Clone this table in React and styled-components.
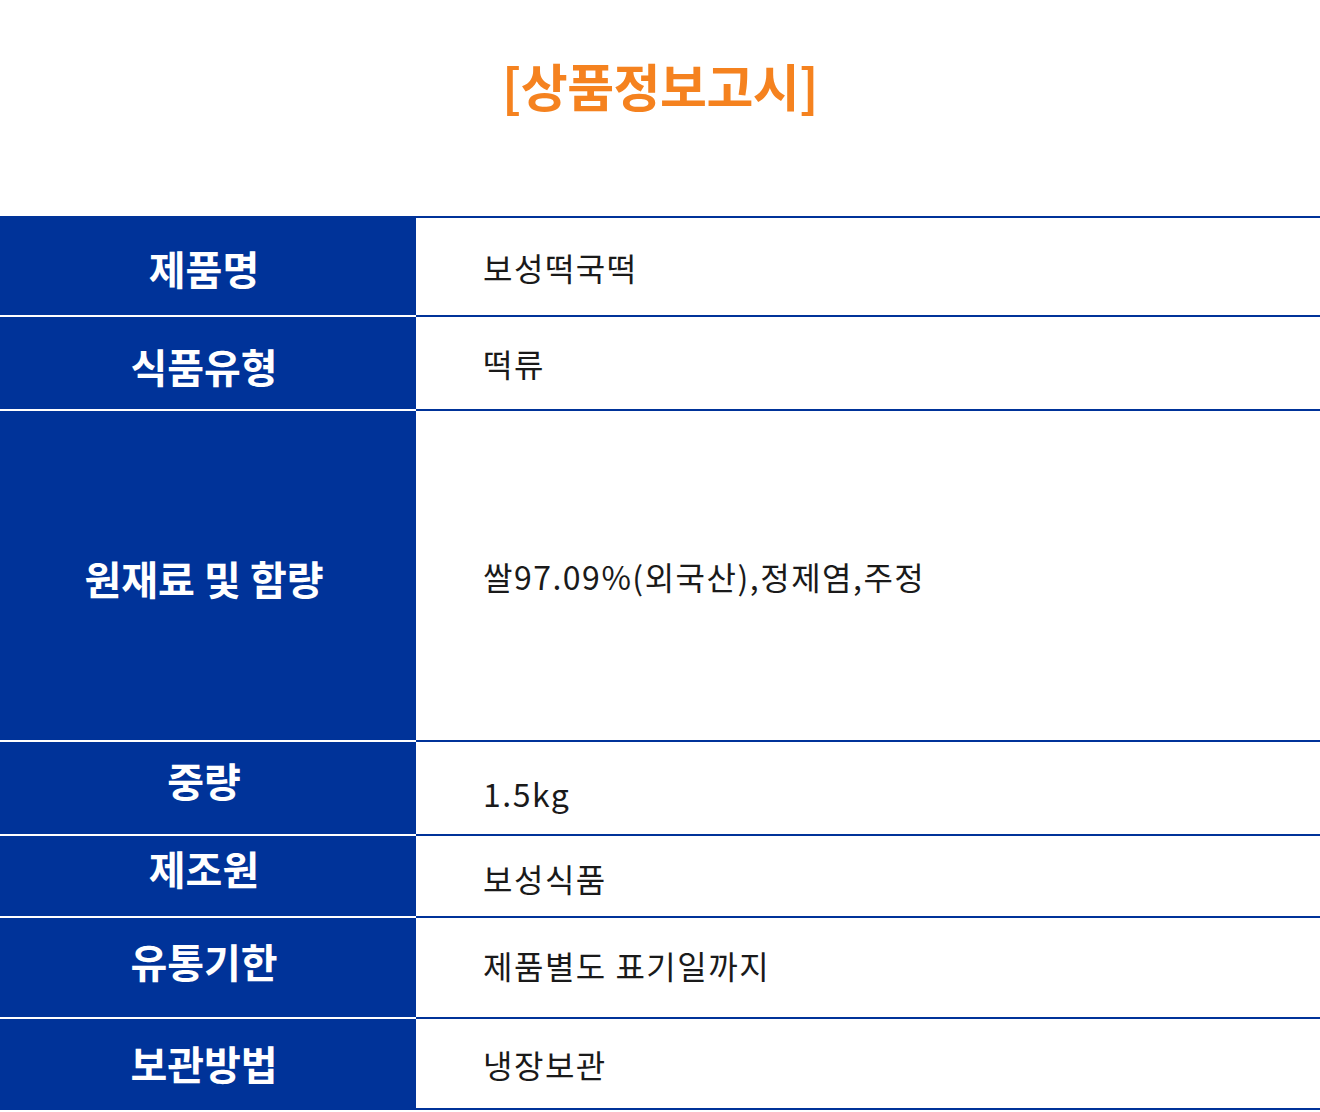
import React from "react";
import styled, { createGlobalStyle } from "styled-components";

const BLUE = "#003399";

const GlobalStyle = createGlobalStyle`
  body {
    margin: 0;
    background: #fff;
    font-family: "Noto Sans CJK KR", "Noto Sans", sans-serif;
  }
`;

const Page = styled.div`
  width: 1320px;
`;

const Title = styled.h2`
  margin: 0;
  padding: 54px 0 100px;
  line-height: 62px;
  text-align: center;
  font-size: 51px;
  font-weight: 700;
  color: #f5821f;
  letter-spacing: -0.5px;
`;

const Table = styled.div`
  display: flex;
  flex-direction: column;
`;

const Row = styled.div`
  display: grid;
  grid-template-columns: 416px 1fr;
  height: ${({ $h }) => $h}px;
`;

const Label = styled.div`
  display: flex;
  align-items: center;
  justify-content: center;
  padding-right: 8px;
  background: ${BLUE};
  border-top: 2px solid ${({ $first }) => ($first ? BLUE : "#fff")};
  border-bottom: ${({ $last }) => ($last ? `2px solid ${BLUE}` : "none")};
  color: #fff;
  font-size: 40px;
  font-weight: 700;
  span {
    position: relative;
    top: ${({ $shift }) => $shift || 0}px;
  }
`;

const Value = styled.div`
  display: flex;
  align-items: center;
  padding-left: 67px;
  border-top: 2px solid ${BLUE};
  border-bottom: ${({ $last }) => ($last ? `2px solid ${BLUE}` : "none")};
  color: #1a1a1a;
  font-size: 32px;
  font-weight: 400;
  letter-spacing: 1.5px;
  span {
    position: relative;
    top: ${({ $shift }) => $shift || 0}px;
  }
`;

const rows = [
  { label: "제품명", value: "보성떡국떡", h: 99, ls: 1 },
  { label: "식품유형", value: "떡류", h: 94, ls: 3 },
  { label: "원재료 및 함량", value: "쌀97.09%(외국산),정제염,주정", h: 331, ls: 2 },
  { label: "중량", value: "1.5kg", h: 94, ls: -8, vs: 5 },
  { label: "제조원", value: "보성식품", h: 82, ls: -8, vs: 2 },
  { label: "유통기한", value: "제품별도 표기일까지", h: 101, ls: -7, vs: -3 },
  { label: "보관방법", value: "냉장보관", h: 91, ls: -1 },
];

export default function App() {
  return (
    <Page>
      <GlobalStyle />
      <Title>[상품정보고시]</Title>
      <Table>
        {rows.map((r, i) => (
          <Row key={r.label} $h={r.h + (i === rows.length - 1 ? 2 : 0)}>
            <Label $first={i === 0} $last={i === rows.length - 1} $shift={r.ls}>
              <span>{r.label}</span>
            </Label>
            <Value $last={i === rows.length - 1} $shift={r.vs}>
              <span>{r.value}</span>
            </Value>
          </Row>
        ))}
      </Table>
    </Page>
  );
}
